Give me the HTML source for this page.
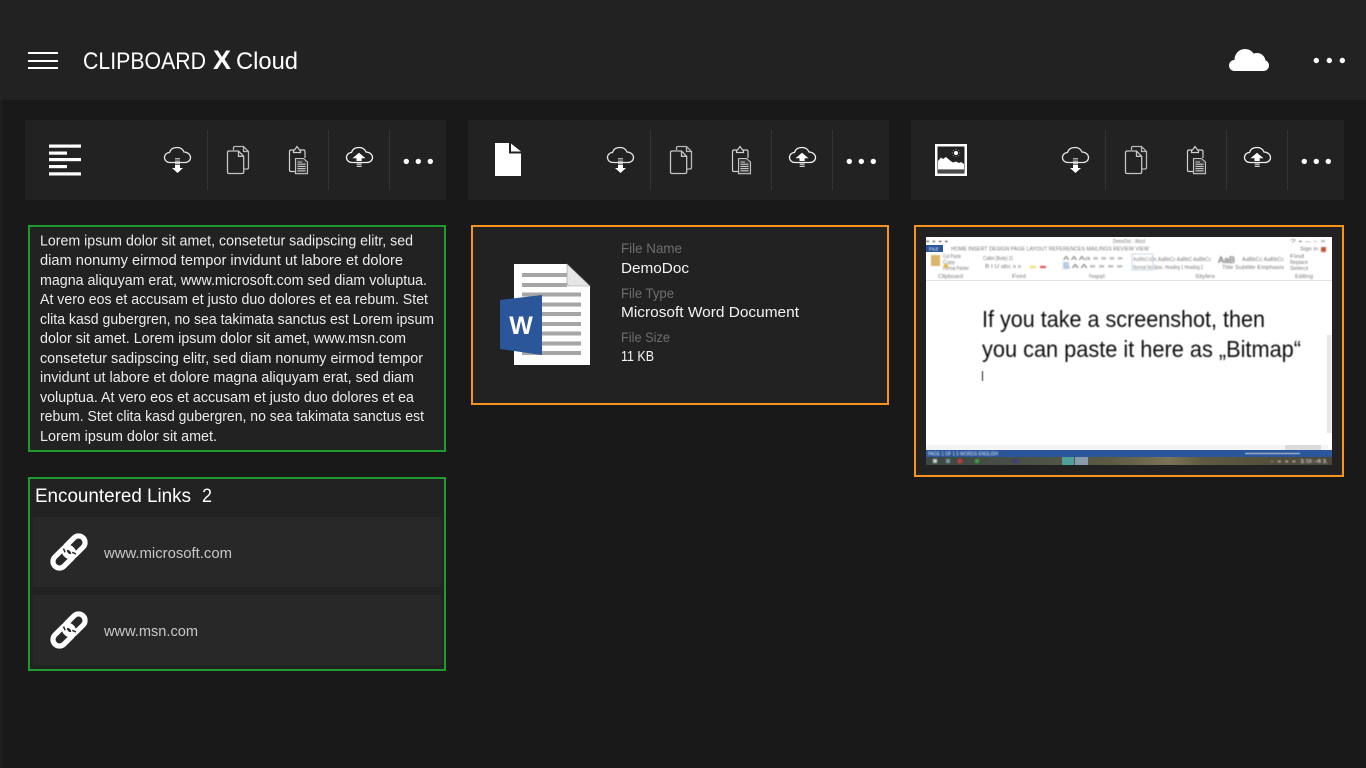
<!DOCTYPE html>
<html><head><meta charset="utf-8"><title>Clipboard X Cloud</title>
<style>
html,body{margin:0;padding:0;background:#191919;width:1366px;height:768px;overflow:hidden}
svg{display:block}
text{font-family:"Liberation Sans",sans-serif}
</style></head>
<body>
<svg width="1366" height="768" viewBox="0 0 1366 768" xmlns="http://www.w3.org/2000/svg">
<defs>
<filter id="b" x="-5%" y="-5%" width="110%" height="110%"><feGaussianBlur stdDeviation="0.45"/></filter>
<linearGradient id="tb" x1="0" x2="1" y1="0" y2="0">
<stop offset="0" stop-color="#3c4644"/><stop offset=".28" stop-color="#4c5245"/><stop offset=".45" stop-color="#5c5a42"/>
<stop offset=".6" stop-color="#7b7358"/><stop offset=".68" stop-color="#5f5a40"/><stop offset=".85" stop-color="#544f3c"/><stop offset="1" stop-color="#4a4638"/>
</linearGradient>
</defs>
<rect width="1366" height="768" fill="#191919"/>
<rect x="0" y="100" width="3" height="668" fill="#1f1f1f"/>
<rect width="1366" height="100" fill="#222"/>

<!-- header -->
<g fill="#fff">
<rect x="28" y="52" width="30" height="2"/><rect x="28" y="60" width="30" height="2"/><rect x="28" y="67" width="30" height="2"/>
<text x="83" y="69" font-size="24" textLength="123" lengthAdjust="spacingAndGlyphs">CLIPBOARD</text>
<text x="213" y="69" font-size="27" font-weight="bold" textLength="18" lengthAdjust="spacingAndGlyphs">X</text>
<text x="236" y="69" font-size="24" textLength="62" lengthAdjust="spacingAndGlyphs">Cloud</text>
<circle cx="1245" cy="59.500" r="10.500"/><circle cx="1257" cy="61.500" r="8.500"/><circle cx="1234.500" cy="65.500" r="5.500"/><circle cx="1263.500" cy="65.500" r="5.500"/>
<rect x="1234.500" y="62" width="29" height="9"/>
<circle cx="1316.300" cy="60.500" r="2.700"/><circle cx="1329.300" cy="60.500" r="2.700"/><circle cx="1342.300" cy="60.500" r="2.700"/>
</g>

<!-- toolbars -->
<rect x="25" y="120" width="421" height="80" fill="#222"/>
<rect x="468" y="120" width="421" height="80" fill="#222"/>
<rect x="911" y="120" width="433" height="80" fill="#222"/>

<g id="tools">
<rect x="207" y="130" width="1" height="60" fill="#353535"/>
<rect x="328" y="130" width="1" height="60" fill="#353535"/>
<rect x="389" y="130" width="1" height="60" fill="#353535"/>
<!-- cloud down -->
<path d="M170 162.500C166.500 162.500 164.500 160 164.500 157.500C164.500 154.500 167 152.500 169.500 152.500C170.500 149 173.500 147.500 177 147.500C180.500 147.500 183 149.500 184 152C187.500 152 190.500 154.500 190.500 157.500C190.500 160.500 188 162.500 185 162.500Z" fill="none" stroke="#e4e4e4" stroke-width="1.300"/>
<rect x="175" y="158" width="5" height="1.500" fill="#aaa"/><rect x="175" y="160.500" width="5" height="1.500" fill="#aaa"/><rect x="175" y="163" width="5" height="1.500" fill="#bbb"/>
<path d="M175 165H180V168H183L177.500 173L172 168H175Z" fill="#fff"/>
<!-- copy -->
<path d="M233.500 150V147.800Q233.500 146.500 235 146.500H243.500L248.500 151.500V167.500Q248.500 169 247 169H244.200M243.500 146.500V151.500H248.500" fill="none" stroke="#b8b8b8" stroke-width="1.300"/>
<path d="M229 151H238.500L243.700 156.300V172Q243.700 173.500 242 173.500H229Q227.500 173.500 227.500 172V152.500Q227.500 151 229 151ZM238.500 151V156.300H243.700" fill="#222" stroke="#c4c4c4" stroke-width="1.300"/>
<!-- clipboard -->
<path d="M293.500 150H294.500L297 146.500L299.500 150H303.500Q305 150 305 151.500V158M295 171.500H291Q289.500 171.500 289.500 170V151.500Q289.500 150 291 150H293.500M293.500 150V152.500H300.500V150" fill="none" stroke="#d0d0d0" stroke-width="1.200"/>
<path d="M295.500 158.500H303.500L307.500 162V173.700H295.500Z" fill="#3a3a3a" stroke="#c4c4c4" stroke-width="1.100"/>
<path d="M297.500 162H302M297.500 164.200H305.500M297.500 166.400H305.500M297.500 168.600H305.500M297.500 170.800H305.500" stroke="#c4c4c4" stroke-width="1.100"/>
<!-- cloud up -->
<path d="M352 162.500C348.500 162.500 346.500 160 346.500 157.500C346.500 154.500 349 152.500 351.500 152.500C352.500 149 355.500 147.500 359 147.500C362.500 147.500 365 149.500 366 152C369.500 152 372.500 154.500 372.500 157.500C372.500 160.500 370 162.500 367 162.500Z" fill="none" stroke="#f2f2f2" stroke-width="1.300"/>
<path d="M359 152.700L365.500 158.300H361.700V161H356.500V158.300H352.500Z" fill="#fff"/>
<rect x="356.700" y="163.500" width="5" height="1.300" fill="#ccc"/><rect x="356.700" y="165.700" width="5" height="1.300" fill="#ccc"/>
<!-- dots -->
<circle cx="406.300" cy="161.400" r="2.700" fill="#fff"/><circle cx="418.300" cy="161.400" r="2.700" fill="#fff"/><circle cx="430.300" cy="161.400" r="2.700" fill="#fff"/>
</g>
<use href="#tools" x="443"/>
<use href="#tools" x="898"/>

<!-- type icons -->
<g fill="#fff">
<rect x="49" y="144.500" width="32" height="3.200"/><rect x="49" y="151.500" width="18" height="3.200"/><rect x="49" y="158" width="32" height="3.200"/><rect x="49" y="165" width="18" height="3.200"/><rect x="49" y="172.300" width="32" height="3.200"/>
<path d="M495 143H509V153.500H521V176H495ZM511 143.500L521 151.500H511Z"/>
</g>
<rect x="936.250" y="145.250" width="29.500" height="29.500" fill="#222" stroke="#fff" stroke-width="2.500"/>
<path d="M938 169.500V161L941 157.500L943 159L946 157L950 160.500L953 162.500L956 161.500L959 163L961 162L964 164V169.500Z" fill="#fff"/>
<rect x="938" y="170" width="26" height="3" fill="#4a4a4a"/>
<circle cx="956" cy="153" r="2" fill="#fff"/>
<path d="M956 148.800V150M956 156V157.200M951.800 153H953M959 153H960.200M953 150L953.800 150.800M958.200 155.200L959 156M959 150L958.200 150.800M953.800 155.200L953 156" stroke="#aaa" stroke-width=".7"/>

<!-- text card -->
<rect x="29" y="226" width="416" height="225" fill="#222" stroke="#1f9a2f" stroke-width="2"/>
<g font-size="14.500" fill="#ececec">
<text x="40" y="245.500" textLength="373" lengthAdjust="spacingAndGlyphs">Lorem ipsum dolor sit amet, consetetur sadipscing elitr, sed</text>
<text x="40" y="265" textLength="363" lengthAdjust="spacingAndGlyphs">diam nonumy eirmod tempor invidunt ut labore et dolore</text>
<text x="40" y="285" textLength="387" lengthAdjust="spacingAndGlyphs">magna aliquyam erat, www.microsoft.com sed diam voluptua.</text>
<text x="40" y="304" textLength="388" lengthAdjust="spacingAndGlyphs">At vero eos et accusam et justo duo dolores et ea rebum. Stet</text>
<text x="40" y="324" textLength="394" lengthAdjust="spacingAndGlyphs">clita kasd gubergren, no sea takimata sanctus est Lorem ipsum</text>
<text x="40" y="343" textLength="366" lengthAdjust="spacingAndGlyphs">dolor sit amet. Lorem ipsum dolor sit amet, www.msn.com</text>
<text x="40" y="363" textLength="383" lengthAdjust="spacingAndGlyphs">consetetur sadipscing elitr, sed diam nonumy eirmod tempor</text>
<text x="40" y="382" textLength="374" lengthAdjust="spacingAndGlyphs">invidunt ut labore et dolore magna aliquyam erat, sed diam</text>
<text x="40" y="402" textLength="374" lengthAdjust="spacingAndGlyphs">voluptua. At vero eos et accusam et justo duo dolores et ea</text>
<text x="40" y="421" textLength="384" lengthAdjust="spacingAndGlyphs">rebum. Stet clita kasd gubergren, no sea takimata sanctus est</text>
<text x="40" y="441" textLength="177" lengthAdjust="spacingAndGlyphs">Lorem ipsum dolor sit amet.</text>
</g>

<!-- links card -->
<rect x="29" y="478" width="416" height="192" fill="#222" stroke="#1f9a2f" stroke-width="2"/>
<text x="35" y="502" font-size="19" fill="#fff" textLength="156" lengthAdjust="spacingAndGlyphs">Encountered Links</text>
<text x="202" y="502" font-size="19" fill="#fff" textLength="10" lengthAdjust="spacingAndGlyphs">2</text>
<rect x="33" y="517" width="408" height="70" fill="#282828"/>
<rect x="33" y="595" width="408" height="70" fill="#282828"/>
<g id="lnk" transform="translate(69 552) rotate(-45)" fill="none" stroke="#fff" stroke-width="5.200">
<rect x="-20" y="-6.500" width="24" height="13" rx="6.500"/>
<rect x="-4" y="-6.500" width="24" height="13" rx="6.500"/>
<path d="M1 -6.300L-0.500 -2.500" stroke="#282828" stroke-width="1.500" transform="translate(-2.500 0)"/>
<path d="M1 6.300L-0.500 2.500" stroke="#282828" stroke-width="1.500" transform="translate(2.500 0)"/>
</g>
<use href="#lnk" y="78"/>
<text x="104" y="558" font-size="15" fill="#c8c8c8" textLength="128" lengthAdjust="spacingAndGlyphs">www.microsoft.com</text>
<text x="104" y="636" font-size="15" fill="#c8c8c8" textLength="94" lengthAdjust="spacingAndGlyphs">www.msn.com</text>

<!-- file card -->
<rect x="472" y="226" width="416" height="178" fill="#222" stroke="#f7941e" stroke-width="2"/>
<path d="M514 264H567L590 286V365H514Z" fill="#fff"/>
<g fill="#a6a6a6">
<rect x="522" y="273" width="45" height="4"/><rect x="522" y="283" width="45" height="4"/>
<rect x="522" y="292.500" width="59" height="4"/><rect x="522" y="302.500" width="59" height="4"/><rect x="522" y="312" width="59" height="4"/><rect x="522" y="322" width="59" height="4"/><rect x="522" y="331.500" width="59" height="4"/><rect x="522" y="341.500" width="59" height="4"/><rect x="522" y="351" width="59" height="4"/>
</g>
<path d="M567 264L590 286H570Q567 286 567 283Z" fill="#e6e6e6" stroke="#999" stroke-width=".6"/>
<path d="M500 300L542 295V355L500 349Z" fill="#2b579a"/>
<text x="521" y="334" font-size="25" font-weight="bold" fill="#fff" text-anchor="middle">W</text>
<g font-size="14" fill="#6e6e6e">
<text x="621" y="253" textLength="61" lengthAdjust="spacingAndGlyphs">File Name</text>
<text x="621" y="298" textLength="53" lengthAdjust="spacingAndGlyphs">File Type</text>
<text x="621" y="342" textLength="49" lengthAdjust="spacingAndGlyphs">File Size</text>
</g>
<g font-size="15" fill="#f4f4f4">
<text x="621" y="273" textLength="68" lengthAdjust="spacingAndGlyphs">DemoDoc</text>
<text x="621" y="317" textLength="178" lengthAdjust="spacingAndGlyphs">Microsoft Word Document</text>
<text x="621" y="361" textLength="33" lengthAdjust="spacingAndGlyphs">11 KB</text>
</g>

<!-- image card -->
<rect x="915" y="226" width="428" height="250" fill="#222" stroke="#f7941e" stroke-width="2"/>
<rect x="926" y="237" width="406" height="228" fill="#fff"/>
<rect x="926" y="280" width="406" height="1" fill="#e2e2e2"/>
<rect x="926" y="245" width="17" height="7" fill="#2b579a"/>
<rect x="1327" y="335" width="4.500" height="98" fill="#e6e6e6"/>
<rect x="926" y="445" width="402" height="5" fill="#f4f4f4"/>
<rect x="1285" y="445" width="36" height="5" fill="#dcdcdc"/>
<rect x="926" y="450" width="406" height="7" fill="#2b579a"/>
<rect x="926" y="457" width="406" height="8" fill="url(#tb)"/>
<rect x="1062" y="457" width="12" height="8" fill="#4f9f9d"/>
<rect x="1075" y="457" width="13" height="8" fill="#8a9bb0"/>
<g filter="url(#b)">
<rect x="931" y="255" width="9" height="11" fill="#d9b66a"/>
<rect x="1132" y="254" width="21" height="16" fill="#fff" stroke="#bcd0e8" stroke-width=".8"/>
<g fill="#777" font-size="5">
<text x="926" y="243" textLength="22" lengthAdjust="spacingAndGlyphs" fill="#444">▪ ▪ ▪ ▪</text>
<text x="1113" y="243" textLength="32" lengthAdjust="spacingAndGlyphs">DemoDoc - Word</text>
<text x="1290" y="243" textLength="36" lengthAdjust="spacingAndGlyphs">? ▪ – ▫ ×</text>
<text x="929" y="250.500" fill="#fff" font-size="4.500">FILE</text>
<text x="951" y="250.500" textLength="198" lengthAdjust="spacingAndGlyphs">HOME      INSERT      DESIGN      PAGE LAYOUT      REFERENCES      MAILINGS      REVIEW      VIEW</text>
<text x="1300" y="250.500" textLength="18" lengthAdjust="spacingAndGlyphs">Sign in</text>
<text x="943" y="258" textLength="18" lengthAdjust="spacingAndGlyphs">Cut Paste</text>
<text x="943" y="264" textLength="12" lengthAdjust="spacingAndGlyphs">Copy</text>
<text x="943" y="270" textLength="26" lengthAdjust="spacingAndGlyphs">Format Painter</text>
<text x="983" y="260" textLength="30" lengthAdjust="spacingAndGlyphs">Calibri (Body) 11</text>
<text x="985" y="268" textLength="36" lengthAdjust="spacingAndGlyphs">B I U abc x x</text>
<text x="1063" y="260" textLength="60" lengthAdjust="spacingAndGlyphs">A A Aa  ≡ ≡ ≡ ≡</text>
<text x="1063" y="268" textLength="60" lengthAdjust="spacingAndGlyphs">A A A  ≡ ≡ ≡ ≡</text>
<text x="1133" y="261" textLength="78" lengthAdjust="spacingAndGlyphs" font-size="5.500">AaBbCcDc AaBbCc AaBbC AaBbCc</text>
<text x="1242" y="261" textLength="42" lengthAdjust="spacingAndGlyphs" font-size="5.500">AaBbCc AaBbCc</text>
<text x="1133" y="269" textLength="70" lengthAdjust="spacingAndGlyphs">Normal  No Spac.  Heading 1  Heading 2</text>
<text x="1222" y="269" textLength="62" lengthAdjust="spacingAndGlyphs">Title      Subtitle   Emphasis</text>
<text x="1290" y="258" textLength="14" lengthAdjust="spacingAndGlyphs">Find</text>
<text x="1290" y="264" textLength="18" lengthAdjust="spacingAndGlyphs">Replace</text>
<text x="1290" y="270" textLength="18" lengthAdjust="spacingAndGlyphs">Select</text>
<text x="938" y="278" textLength="25" lengthAdjust="spacingAndGlyphs">Clipboard</text>
<text x="1012" y="278" textLength="14" lengthAdjust="spacingAndGlyphs">Font</text>
<text x="1089" y="278" textLength="16" lengthAdjust="spacingAndGlyphs">Paragraph</text>
<text x="1195" y="278" textLength="20" lengthAdjust="spacingAndGlyphs">Styles</text>
<text x="1295" y="278" textLength="18" lengthAdjust="spacingAndGlyphs">Editing</text>
<text x="928" y="455.500" fill="#dfe7f2" textLength="70" lengthAdjust="spacingAndGlyphs">PAGE 1 OF 1  5 WORDS  ENGLISH</text>
</g>
<text x="1218" y="263" font-size="9" fill="#444" filter="url(#b)">AaB</text>
<rect x="1321" y="247" width="5" height="5" fill="#b9552f" filter="url(#b)"/>
<rect x="944" y="264" width="4" height="4" fill="#e2b33c" filter="url(#b)"/>
<rect x="1040" y="266" width="6" height="2" fill="#d33" filter="url(#b)"/><rect x="1030" y="266" width="6" height="2" fill="#e7d94a" filter="url(#b)"/>
<rect x="1063" y="262" width="6" height="7" fill="#b7cbe6" filter="url(#b)"/>
<rect x="1245" y="453" width="55" height="1" fill="#cfd9e8"/>
<g filter="url(#b)">
<rect x="975" y="459" width="4" height="4" fill="#3aa04a"/><rect x="958" y="459" width="4" height="4" fill="#d43a3a"/>
<rect x="1013" y="459" width="5" height="4" fill="#3a3e7e"/>
<rect x="933" y="459" width="4" height="4" fill="#cfd6d6"/><rect x="946" y="459" width="4" height="4" fill="#7f9aa0"/>
<text x="1270" y="463" fill="#ddd" font-size="5" textLength="58" lengthAdjust="spacingAndGlyphs">▫ ▪ ▪ ▪ 19:41</text>
</g>
<g fill="#111" font-size="23">
<text x="982" y="327" textLength="283" lengthAdjust="spacingAndGlyphs">If you take a screenshot, then</text>
<text x="982" y="357" textLength="319" lengthAdjust="spacingAndGlyphs">you can paste it here as „Bitmap“</text>
</g>
<rect x="982" y="371" width="1" height="10" fill="#222"/>
</svg>
</body></html>
